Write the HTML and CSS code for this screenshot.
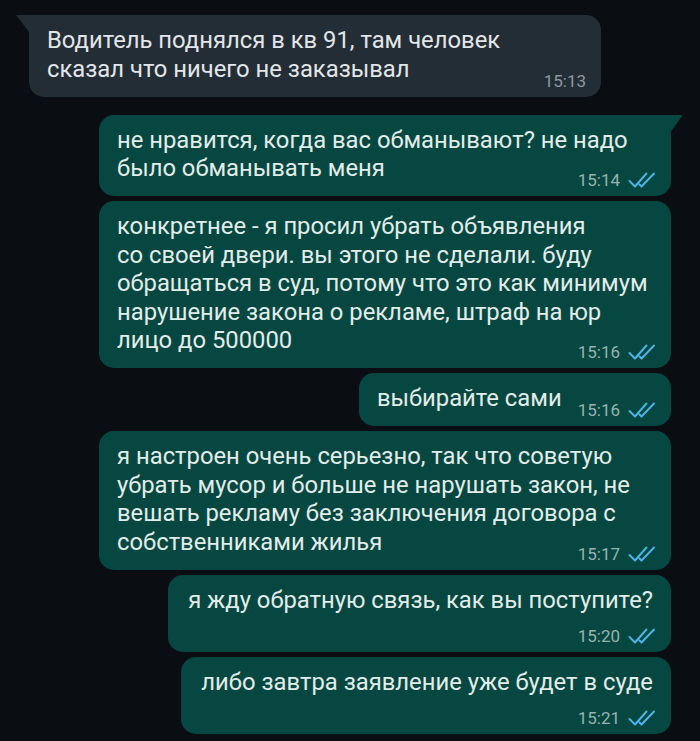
FILE: index.html
```html
<!DOCTYPE html>
<html lang="ru">
<head>
    <meta charset="UTF-8">
    <meta name="viewport" content="width=device-width, initial-scale=1.0">
    <title>Чат</title>
    <link rel="stylesheet" href="styles.css">
</head>
<body>
    <div class="chat">
        <!-- входящее -->
        <div class="msg in full tail">
            <span class="text">Водитель поднялся в кв 91, там человек<br>сказал что ничего не заказывал</span>
            <span class="meta"><span class="time">15:13</span></span>
        </div>

        <!-- исходящие -->
        <div class="msg out full tail first">
            <span class="text">не нравится, когда вас обманывают? не надо<br>было обманывать меня</span>
            <span class="meta"><span class="time">15:14</span><svg class="ticks" viewBox="0 0 28 16"><path d="M1.5 9 L7 14.5 L18.5 1.5 M11.5 12.5 L13.5 14.5 L26 1.5"/></svg></span>
        </div>

        <div class="msg out full">
            <span class="text">конкретнее - я просил убрать объявления<br>со своей двери. вы этого не сделали. буду<br>обращаться в суд, потому что это как минимум<br>нарушение закона о рекламе, штраф на юр<br>лицо до 500000</span>
            <span class="meta"><span class="time">15:16</span><svg class="ticks" viewBox="0 0 28 16"><path d="M1.5 9 L7 14.5 L18.5 1.5 M11.5 12.5 L13.5 14.5 L26 1.5"/></svg></span>
        </div>

        <div class="msg out">
            <span class="text">выбирайте сами</span>
            <span class="meta"><span class="time">15:16</span><svg class="ticks" viewBox="0 0 28 16"><path d="M1.5 9 L7 14.5 L18.5 1.5 M11.5 12.5 L13.5 14.5 L26 1.5"/></svg></span>
        </div>

        <div class="msg out full">
            <span class="text">я настроен очень серьезно, так что советую<br>убрать мусор и больше не нарушать закон, не<br>вешать рекламу без заключения договора с<br>собственниками жилья</span>
            <span class="meta"><span class="time">15:17</span><svg class="ticks" viewBox="0 0 28 16"><path d="M1.5 9 L7 14.5 L18.5 1.5 M11.5 12.5 L13.5 14.5 L26 1.5"/></svg></span>
        </div>

        <div class="msg out below">
            <span class="text">я жду обратную связь, как вы поступите?</span>
            <span class="meta"><span class="time">15:20</span><svg class="ticks" viewBox="0 0 28 16"><path d="M1.5 9 L7 14.5 L18.5 1.5 M11.5 12.5 L13.5 14.5 L26 1.5"/></svg></span>
        </div>

        <div class="msg out below">
            <span class="text">либо завтра заявление уже будет в суде</span>
            <span class="meta"><span class="time">15:21</span><svg class="ticks" viewBox="0 0 28 16"><path d="M1.5 9 L7 14.5 L18.5 1.5 M11.5 12.5 L13.5 14.5 L26 1.5"/></svg></span>
        </div>
    </div>
</body>
</html>
```

FILE: styles.css
```css
* {
    box-sizing: border-box;
}

body {
    margin: 0;
    width: 700px;
    height: 741px;
    overflow: hidden;
    background: #0a0d12;
    font-family: Roboto, "Noto Sans", sans-serif;
}

.chat {
    display: flex;
    flex-direction: column;
    align-items: flex-start;
    gap: 5px;
    padding: 15px 29px 0 29px;
}

.msg {
    position: relative;
    max-width: 572px;
    padding: 11px 15px 6px 18px;
    border-radius: 15px;
    font-size: 23.8px;
    line-height: 28.5px;
}

.msg.full {
    width: 572px;
}

.msg.in {
    background: #232d35;
    color: #e3e6e8;
}

.msg.out {
    align-self: flex-end;
    background: #064841;
    color: #e2ece9;
}

.msg.first {
    margin-top: 13px;
}

/* хвостик пузыря */
.msg.tail::before {
    content: "";
    position: absolute;
    top: 0;
    height: 17px;
    background: inherit;
}

.msg.in.tail {
    border-top-left-radius: 0;
}

.msg.in.tail::before {
    left: -13px;
    width: 13px;
    clip-path: polygon(0 0, 100% 0, 100% 100%);
}

.msg.out.tail {
    border-top-right-radius: 0;
}

.msg.out.tail::before {
    right: -12px;
    width: 12px;
    clip-path: polygon(0 0, 100% 0, 0 100%);
}

.meta {
    float: right;
    display: flex;
    align-items: center;
    gap: 8px;
    margin: 16px 0 0 16px;
    font-size: 17px;
    line-height: 20px;
    height: 20px;
}

.msg.in .time {
    color: #8e999f;
}

.msg.out .time {
    color: #98b2ad;
}

.msg.below {
    padding-left: 20px;
    padding-right: 18px;
}

.msg.below .meta {
    float: none;
    justify-content: flex-end;
    margin: 11.5px -3px 0 0;
}

.ticks {
    width: 28px;
    height: 16px;
    fill: none;
    stroke: #50b4ea;
    stroke-width: 1.9;
    stroke-linecap: round;
    stroke-linejoin: round;
}
```
